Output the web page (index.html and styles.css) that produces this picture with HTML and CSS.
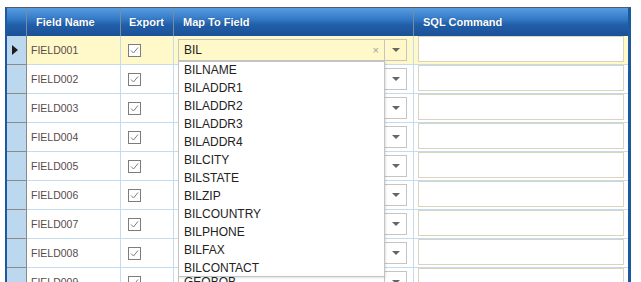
FILE: index.html
```html
<!DOCTYPE html>
<html>
<head>
<meta charset="utf-8">
<link rel="stylesheet" href="styles.css">
</head>
<body>
<div class="grid">
  <div class="hdr">
    <div class="h rh"></div>
    <div class="h fn">Field Name</div>
    <div class="h ex">Export</div>
    <div class="h map">Map To Field</div>
    <div class="h sql">SQL Command</div>
  </div>

  <div class="row sel">
    <div class="c rh"><span class="arrow"></span></div>
    <div class="c fn">FIELD001</div>
    <div class="c ex"><svg class="chk" width="13" height="13" viewBox="0 0 13 13"><rect x="0.5" y="0.5" width="12" height="12" fill="#fff" stroke="#7c7c7c"/><polyline points="3,6.5 5.5,9 10,3.5" fill="none" stroke="#7c7c7c" stroke-width="1"/></svg></div>
    <div class="c map"><div class="combo"><div class="inp">BIL<span class="x">×</span></div><div class="btn"><i></i></div></div></div>
    <div class="c sql"><div class="tb"></div></div>
  </div>

  <div class="row">
    <div class="c rh"></div>
    <div class="c fn">FIELD002</div>
    <div class="c ex"><svg class="chk" width="13" height="13" viewBox="0 0 13 13"><rect x="0.5" y="0.5" width="12" height="12" fill="#fff" stroke="#7c7c7c"/><polyline points="3,6.5 5.5,9 10,3.5" fill="none" stroke="#7c7c7c" stroke-width="1"/></svg></div>
    <div class="c map"><div class="combo"><div class="inp"></div><div class="btn"><i></i></div></div></div>
    <div class="c sql"><div class="tb"></div></div>
  </div>

  <div class="row">
    <div class="c rh"></div>
    <div class="c fn">FIELD003</div>
    <div class="c ex"><svg class="chk" width="13" height="13" viewBox="0 0 13 13"><rect x="0.5" y="0.5" width="12" height="12" fill="#fff" stroke="#7c7c7c"/><polyline points="3,6.5 5.5,9 10,3.5" fill="none" stroke="#7c7c7c" stroke-width="1"/></svg></div>
    <div class="c map"><div class="combo"><div class="inp"></div><div class="btn"><i></i></div></div></div>
    <div class="c sql"><div class="tb"></div></div>
  </div>

  <div class="row">
    <div class="c rh"></div>
    <div class="c fn">FIELD004</div>
    <div class="c ex"><svg class="chk" width="13" height="13" viewBox="0 0 13 13"><rect x="0.5" y="0.5" width="12" height="12" fill="#fff" stroke="#7c7c7c"/><polyline points="3,6.5 5.5,9 10,3.5" fill="none" stroke="#7c7c7c" stroke-width="1"/></svg></div>
    <div class="c map"><div class="combo"><div class="inp"></div><div class="btn"><i></i></div></div></div>
    <div class="c sql"><div class="tb"></div></div>
  </div>

  <div class="row">
    <div class="c rh"></div>
    <div class="c fn">FIELD005</div>
    <div class="c ex"><svg class="chk" width="13" height="13" viewBox="0 0 13 13"><rect x="0.5" y="0.5" width="12" height="12" fill="#fff" stroke="#7c7c7c"/><polyline points="3,6.5 5.5,9 10,3.5" fill="none" stroke="#7c7c7c" stroke-width="1"/></svg></div>
    <div class="c map"><div class="combo"><div class="inp"></div><div class="btn"><i></i></div></div></div>
    <div class="c sql"><div class="tb"></div></div>
  </div>

  <div class="row">
    <div class="c rh"></div>
    <div class="c fn">FIELD006</div>
    <div class="c ex"><svg class="chk" width="13" height="13" viewBox="0 0 13 13"><rect x="0.5" y="0.5" width="12" height="12" fill="#fff" stroke="#7c7c7c"/><polyline points="3,6.5 5.5,9 10,3.5" fill="none" stroke="#7c7c7c" stroke-width="1"/></svg></div>
    <div class="c map"><div class="combo"><div class="inp"></div><div class="btn"><i></i></div></div></div>
    <div class="c sql"><div class="tb"></div></div>
  </div>

  <div class="row">
    <div class="c rh"></div>
    <div class="c fn">FIELD007</div>
    <div class="c ex"><svg class="chk" width="13" height="13" viewBox="0 0 13 13"><rect x="0.5" y="0.5" width="12" height="12" fill="#fff" stroke="#7c7c7c"/><polyline points="3,6.5 5.5,9 10,3.5" fill="none" stroke="#7c7c7c" stroke-width="1"/></svg></div>
    <div class="c map"><div class="combo"><div class="inp"></div><div class="btn"><i></i></div></div></div>
    <div class="c sql"><div class="tb"></div></div>
  </div>

  <div class="row">
    <div class="c rh"></div>
    <div class="c fn">FIELD008</div>
    <div class="c ex"><svg class="chk" width="13" height="13" viewBox="0 0 13 13"><rect x="0.5" y="0.5" width="12" height="12" fill="#fff" stroke="#7c7c7c"/><polyline points="3,6.5 5.5,9 10,3.5" fill="none" stroke="#7c7c7c" stroke-width="1"/></svg></div>
    <div class="c map"><div class="combo"><div class="inp"></div><div class="btn"><i></i></div></div></div>
    <div class="c sql"><div class="tb"></div></div>
  </div>

  <div class="row">
    <div class="c rh"></div>
    <div class="c fn">FIELD009</div>
    <div class="c ex"><svg class="chk" width="13" height="13" viewBox="0 0 13 13"><rect x="0.5" y="0.5" width="12" height="12" fill="#fff" stroke="#7c7c7c"/><polyline points="3,6.5 5.5,9 10,3.5" fill="none" stroke="#7c7c7c" stroke-width="1"/></svg></div>
    <div class="c map"><div class="combo"><div class="inp">GEOBOB</div><div class="btn"><i></i></div></div></div>
    <div class="c sql"><div class="tb"></div></div>
  </div>

  <ul class="list">
    <li>BILNAME</li>
    <li>BILADDR1</li>
    <li>BILADDR2</li>
    <li>BILADDR3</li>
    <li>BILADDR4</li>
    <li>BILCITY</li>
    <li>BILSTATE</li>
    <li>BILZIP</li>
    <li>BILCOUNTRY</li>
    <li>BILPHONE</li>
    <li>BILFAX</li>
    <li>BILCONTACT</li>
  </ul>
</div>
</body>
</html>
```

FILE: styles.css
```css
html, body {
  margin: 0;
  padding: 0;
  background: #fff;
  overflow: hidden;
  height: 282px;
}

.grid {
  position: relative;
  margin: 7px 0 0 5px;
  width: 626px;
  box-sizing: border-box;
  border-top: 1px solid #5a5a5a;
  border-left: 2px solid #1c5aa0;
  border-right: 3px solid #1c5aa0;
  font-family: "Liberation Sans", Arial, sans-serif;
}

.hdr {
  display: flex;
  height: 28px;
  background: linear-gradient(#579be2 0%, #3479c6 40%, #215fa9 60%, #1a5096 100%);
}

.h {
  box-sizing: border-box;
  height: 28px;
  border-right: 1px solid #7c8a9e;
  color: #fff;
  font-weight: bold;
  font-size: 11px;
  line-height: 28px;
  padding-left: 9px;
  text-shadow: 0 0 1px rgba(0, 30, 80, 0.5);
  white-space: nowrap;
}
.h.rh { padding-left: 0; }
.h.sql { border-right: none; }

.rh { width: 20px; flex: none; }
.fn { width: 94px; flex: none; }
.ex { width: 53px; flex: none; }
.map { width: 240px; flex: none; }
.sql { width: 214px; flex: none; }

.h.fn, .h.map, .h.sql { padding-left: 9px; }
.h.ex { padding-left: 8px; }

.row {
  display: flex;
  height: 29px;
}

.c {
  box-sizing: border-box;
  height: 29px;
  border-right: 1px solid #c2dbef;
  border-bottom: 1px solid #c2dbef;
  background: #fff;
}

.c.rh {
  background: #bcd8ee;
  border-right: 1px solid #8a8a8a;
  border-bottom: 1px solid #8a8a8a;
  display: flex;
  align-items: center;
  padding-left: 5px;
}
.c.sql { border-right: none; }

.c.fn {
  font-size: 10.5px;
  color: #5a4a4a;
  line-height: 28px;
  padding-left: 4px;
}

.c.ex {
  display: flex;
  align-items: center;
  padding-left: 7px;
}
.chk { display: block; }

.row.sel .c.fn,
.row.sel .c.ex,
.row.sel .c.map,
.row.sel .c.sql {
  background: #fff8c8;
}

.arrow {
  width: 0;
  height: 0;
  border-left: 6px solid #1e1e1e;
  border-top: 5.5px solid transparent;
  border-bottom: 5.5px solid transparent;
}

.c.map {
  padding: 3px 0 0 4px;
}

.combo {
  display: flex;
  height: 22px;
}

.inp {
  box-sizing: border-box;
  width: 207px;
  height: 22px;
  border: 1px solid #c4c4c4;
  font-size: 12px;
  color: #222;
  line-height: 20px;
  padding-left: 5px;
  display: flex;
  justify-content: space-between;
  background: #fff;
}
.row.sel .inp, .row.sel .btn { background: #fff8c8; }

.x {
  color: #a0a0a0;
  font-size: 11px;
  padding-right: 5px;
}

.btn {
  box-sizing: border-box;
  width: 22px;
  height: 22px;
  border: 1px solid #c4c4c4;
  border-left: none;
  display: flex;
  align-items: center;
  justify-content: center;
  background: #fff;
}
.btn i {
  width: 0;
  height: 0;
  border-top: 4px solid #666;
  border-left: 4px solid transparent;
  border-right: 4px solid transparent;
}

.tb {
  box-sizing: border-box;
  margin-left: 4px;
  width: 206px;
  height: 26px;
  border: 1px solid #d8d4bf;
  background: #fff;
}

.list {
  position: absolute;
  left: 171px;
  top: 53px;
  width: 207px;
  height: 216px;
  box-sizing: border-box;
  margin: 0;
  padding: 0;
  list-style: none;
  background: #fff;
  border: 1px solid #c4c4c4;
  box-shadow: 1px 1px 2px rgba(0, 0, 0, 0.12);
}
.list li {
  height: 18px;
  line-height: 16px;
  font-size: 12px;
  color: #222;
  padding-left: 5px;
}
```
